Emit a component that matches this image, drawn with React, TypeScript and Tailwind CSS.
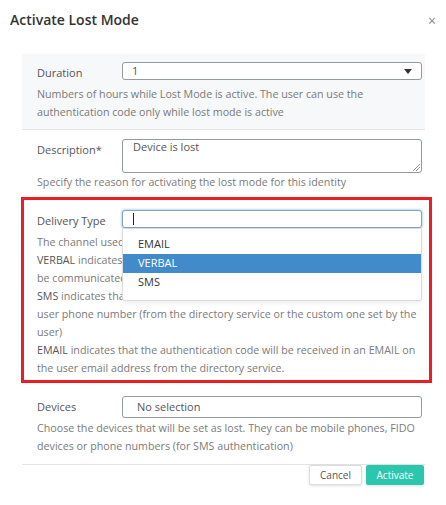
import React from 'react'

const font = { fontFamily: '"Open Sans", "Liberation Sans", sans-serif' }

function Caret() {
  return (
    <svg width="8" height="5" viewBox="0 0 8 5" className="shrink-0">
      <path d="M0 0 L8 0 L4 5 Z" fill="#333" />
    </svg>
  )
}

function Row({ label, children }: { label: string; children: React.ReactNode }) {
  return (
    <div className="flex items-start pr-[3px]">
      <div className="w-[85px] shrink-0 pt-[2px] text-[11px] leading-[18px] text-[#555]">{label}</div>
      <div className="flex-1">{children}</div>
    </div>
  )
}

const help = 'text-[10.7px] leading-[18px] text-[#7a7a7a] whitespace-nowrap'

export default function App() {
  return (
    <div className="relative w-[446px] h-[505px] bg-white overflow-hidden text-[#555]" style={font}>
      {/* header */}
      <div className="flex items-center justify-between h-[38px] pl-[10px] pr-[10px]">
        <h1 className="text-[14px] font-semibold text-[#333]">Activate Lost Mode</h1>
        <span className="text-[14px] text-[#888] pt-[3px]">×</span>
      </div>

      <div className="ml-[22px] w-[403px] mt-[16px]">
        {/* duration */}
        <div className="bg-[#f7f8f9] border-b border-[#e2e4e6] pl-[15px] pt-[8px] pb-[8px]">
          <Row label="Duration">
            <div className="h-[18px] border border-[#8f9c98] rounded-[3px] bg-white flex items-center justify-between pl-[9px] pr-[9px]">
              <span className="text-[11px] text-[#555]">1</span>
              <Caret />
            </div>
          </Row>
          <p className={`mt-[3px] ${help}`}>
            Numbers of hours while Lost Mode is active. The user can use the
            <br />
            authentication code only while lost mode is active
          </p>
        </div>

        {/* description */}
        <div className="pl-[15px] pt-[9px] pb-[7px]">
          <Row label="Description*">
            <div className="relative h-[34px] border border-[#8f9c98] rounded-[3px] bg-white pl-[10px] pt-0 text-[11px] leading-[14px] text-[#555]">
              Device is lost
              <svg width="8" height="8" viewBox="0 0 8 8" className="absolute right-[1px] bottom-[1px]">
                <path d="M1 8 L8 1 M4 8 L8 4" stroke="#777" strokeWidth="0.8" />
              </svg>
            </div>
          </Row>
          <p className={help}>Specify the reason for activating the lost mode for this identity</p>
        </div>

        {/* delivery type */}
        <div className="pl-[15px] pt-[12px] pb-[9px]">
          <Row label="Delivery Type">
            <div className="h-[18px] border border-[#8aa0b8] rounded-[3px] bg-white shadow-[0_0_2px_1px_rgba(102,175,233,0.45)] flex items-center pl-[10px]">
              <span className="w-px h-[12px] bg-[#222]" />
            </div>
          </Row>
          <div className={`mt-[3px] ${help}`}>
            <p>The channel used to deliver the authentication code to the user.</p>
            <p>
              <span className="text-[#555]">VERBAL</span> indicates that the code will be displayed here and it must
              <br />
              be communicated verbally to the user by the operator.
            </p>
            <p>
              <span className="text-[#555]">SMS</span> indicates that the code will be received in an SMS on the
              <br />
              user phone number (from the directory service or the custom one set by the
              <br />
              user)
            </p>
            <p>
              <span className="text-[#555]">EMAIL</span> indicates that the authentication code will be received in an EMAIL on
              <br />
              the user email address from the directory service.
            </p>
          </div>
        </div>

        {/* devices */}
        <div className="pl-[15px] pt-[10px] pb-[9px] border-b border-[#e2e4e6]">
          <Row label="Devices">
            <div className="h-[22px] border border-[#8f9c98] rounded-[3px] bg-white flex items-center pl-[14px]">
              <span className="text-[11px] text-[#555]">No selection</span>
            </div>
          </Row>
          <p className={`mt-[1px] ${help}`}>
            Choose the devices that will be set as lost. They can be mobile phones, FIDO
            <br />
            devices or phone numbers (for SMS authentication)
          </p>
        </div>

        {/* footer */}
        <div className="flex justify-end gap-[4px] pr-[1px]">
          <button className="w-[53px] h-[20px] border border-[#ddd] bg-white rounded-[2px] text-[10px] text-[#555] shadow-[0_1px_3px_rgba(0,0,0,0.12)]">
            Cancel
          </button>
          <button className="w-[58px] h-[20px] bg-[#2bc6ae] rounded-[2px] text-[10px] text-white shadow-[0_1px_3px_rgba(0,0,0,0.12)]">
            Activate
          </button>
        </div>
      </div>

      {/* dropdown menu */}
      <div className="absolute left-[122px] top-[228px] w-[300px] h-[73px] bg-white border border-[#dcdcdc] rounded-b-[3px] shadow-[0_2px_4px_rgba(0,0,0,0.08)] pt-[6px]">
        {['EMAIL', 'VERBAL', 'SMS'].map(o => (
          <div
            key={o}
            className={`h-[19px] flex items-center pl-[15px] text-[11px] ${o === 'VERBAL' ? 'bg-[#428bca] text-white' : 'text-[#333]'}`}
          >
            {o}
          </div>
        ))}
      </div>

      {/* annotation outline */}
      <div className="absolute left-[21px] top-[197px] w-[411px] h-[186px] border-[3px] border-[#ec1c24] pointer-events-none" />
    </div>
  )
}
